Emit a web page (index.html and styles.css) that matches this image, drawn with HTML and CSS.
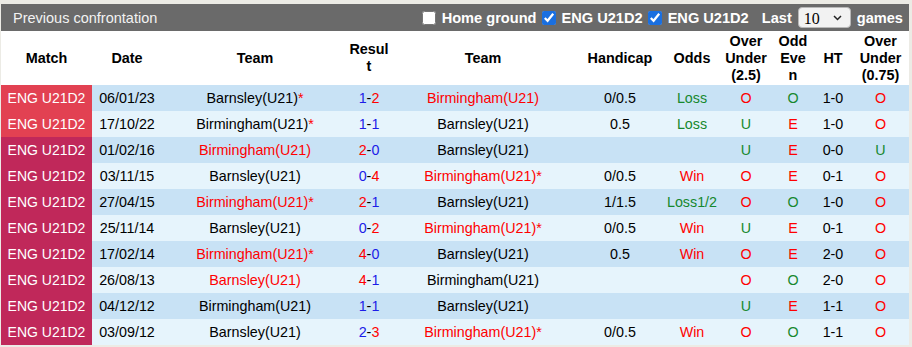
FILE: index.html
```html
<!DOCTYPE html>
<html>
<head>
<meta charset="utf-8">
<link rel="stylesheet" href="styles.css">
</head>
<body>
<div class="panel">
  <div class="bar">
    <span class="bar-title">Previous confrontation</span>
    <div class="controls">
      <label class="opt"><input type="checkbox">Home ground</label>
      <label class="opt"><input type="checkbox" checked>ENG U21D2</label>
      <label class="opt"><input type="checkbox" checked>ENG U21D2</label>
      <span class="last">Last</span>
      <span class="sel-wrap">
        <select class="sel"><option>10</option><option>20</option></select>
        <svg class="chev" width="9" height="6" viewBox="0 0 9 6"><path d="M1 1 L4.5 4.5 L8 1" fill="none" stroke="#222" stroke-width="1.5"/></svg>
      </span>
      <span class="games">games</span>
    </div>
  </div>
  <table class="grid">
    <colgroup>
      <col class="w-match"><col class="w-date"><col class="w-team"><col class="w-res"><col class="w-team">
      <col class="w-hc"><col class="w-odds"><col class="w-ou"><col class="w-oe"><col class="w-ht"><col class="w-ou2">
    </colgroup>
    <thead>
      <tr>
        <th>Match</th><th>Date</th><th>Team</th><th class="h-res">Result</th><th>Team</th>
        <th>Handicap</th><th>Odds</th><th>Over Under (2.5)</th><th class="h-oe">Odd Even</th><th>HT</th><th>Over Under (0.75)</th>
      </tr>
    </thead>
    <tbody>
      <tr class="r1"><td class="lg lg1">ENG U21D2</td><td>06/01/23</td><td>Barnsley(U21)<span class="r">*</span></td><td><span class="b">1</span>-<span class="r">2</span></td><td class="r">Birmingham(U21)</td><td>0/0.5</td><td class="g">Loss</td><td class="r">O</td><td class="g">O</td><td>1-0</td><td class="r">O</td></tr>
      <tr class="r2"><td class="lg lg1">ENG U21D2</td><td>17/10/22</td><td>Birmingham(U21)<span class="r">*</span></td><td><span class="b">1</span>-<span class="b">1</span></td><td>Barnsley(U21)</td><td>0.5</td><td class="g">Loss</td><td class="g">U</td><td class="r">E</td><td>1-0</td><td class="r">O</td></tr>
      <tr class="r1"><td class="lg">ENG U21D2</td><td>01/02/16</td><td class="r">Birmingham(U21)</td><td><span class="r">2</span>-<span class="b">0</span></td><td>Barnsley(U21)</td><td></td><td></td><td class="g">U</td><td class="r">E</td><td>0-0</td><td class="g">U</td></tr>
      <tr class="r2"><td class="lg">ENG U21D2</td><td>03/11/15</td><td>Barnsley(U21)</td><td><span class="b">0</span>-<span class="r">4</span></td><td class="r">Birmingham(U21)*</td><td>0/0.5</td><td class="r">Win</td><td class="r">O</td><td class="r">E</td><td>0-1</td><td class="r">O</td></tr>
      <tr class="r1"><td class="lg">ENG U21D2</td><td>27/04/15</td><td class="r">Birmingham(U21)*</td><td><span class="r">2</span>-<span class="b">1</span></td><td>Barnsley(U21)</td><td>1/1.5</td><td class="g">Loss1/2</td><td class="r">O</td><td class="g">O</td><td>1-0</td><td class="r">O</td></tr>
      <tr class="r2"><td class="lg">ENG U21D2</td><td>25/11/14</td><td>Barnsley(U21)</td><td><span class="b">0</span>-<span class="r">2</span></td><td class="r">Birmingham(U21)*</td><td>0/0.5</td><td class="r">Win</td><td class="g">U</td><td class="r">E</td><td>0-1</td><td class="r">O</td></tr>
      <tr class="r1"><td class="lg">ENG U21D2</td><td>17/02/14</td><td class="r">Birmingham(U21)*</td><td><span class="r">4</span>-<span class="b">0</span></td><td>Barnsley(U21)</td><td>0.5</td><td class="r">Win</td><td class="r">O</td><td class="r">E</td><td>2-0</td><td class="r">O</td></tr>
      <tr class="r2"><td class="lg">ENG U21D2</td><td>26/08/13</td><td class="r">Barnsley(U21)</td><td><span class="r">4</span>-<span class="b">1</span></td><td>Birmingham(U21)</td><td></td><td></td><td class="r">O</td><td class="g">O</td><td>2-0</td><td class="r">O</td></tr>
      <tr class="r1"><td class="lg">ENG U21D2</td><td>04/12/12</td><td>Birmingham(U21)</td><td><span class="b">1</span>-<span class="b">1</span></td><td>Barnsley(U21)</td><td></td><td></td><td class="g">U</td><td class="r">E</td><td>1-1</td><td class="r">O</td></tr>
      <tr class="r2"><td class="lg">ENG U21D2</td><td>03/09/12</td><td>Barnsley(U21)</td><td><span class="b">2</span>-<span class="r">3</span></td><td class="r">Birmingham(U21)*</td><td>0/0.5</td><td class="r">Win</td><td class="r">O</td><td class="g">O</td><td>1-1</td><td class="r">O</td></tr>
    </tbody>
  </table>
</div>
</body>
</html>
```
FILE: styles.css
```css
html, body {
  margin: 0;
  padding: 0;
  background: #ecebe5;
}
body {
  font-family: "Liberation Sans", Arial, sans-serif;
  font-size: 14px;
  color: #000;
}
.panel {
  margin: 4px 0 0 1px;
  width: 908px;
}
.bar {
  height: 27px;
  background: #6a6a6a;
  display: flex;
  align-items: center;
  justify-content: space-between;
  padding: 0 6px 0 12px;
}
.bar-title {
  color: #f2f2f2;
  font-size: 14.5px;
}
.controls {
  display: flex;
  align-items: center;
  color: #fff;
  font-weight: bold;
  font-size: 14.6px;
}
.opt {
  display: flex;
  align-items: center;
}
.opt input {
  margin: 0 6px 0 5px;
  width: 14px;
  height: 14px;
  accent-color: #1a6fe0;
}
.last {
  margin-left: 13px;
}
.sel-wrap {
  position: relative;
  margin: 0 6px;
  display: flex;
}
.sel {
  appearance: none;
  -webkit-appearance: none;
  width: 53px;
  height: 21px;
  border: 1px solid #b8b8b8;
  border-radius: 4px;
  background: #f2f2f2;
  font-family: "Liberation Serif", "Times New Roman", serif;
  font-size: 16px;
  padding: 1px 0 0 5px;
  color: #000;
}
.chev {
  position: absolute;
  right: 9px;
  top: 8px;
  pointer-events: none;
}
.grid {
  width: 908px;
  border-collapse: collapse;
  table-layout: fixed;
}
.w-match { width: 91px; }
.w-date { width: 70px; }
.w-team { width: 186px; }
.w-res { width: 42px; }
.w-hc { width: 88px; }
.w-odds { width: 56px; }
.w-ou { width: 52px; }
.w-oe { width: 42px; }
.w-ht { width: 38px; }
.w-ou2 { width: 57px; }
.grid th {
  background: #fff;
  height: 54px;
  padding: 0;
  font-size: 14.4px;
  font-weight: bold;
  line-height: 17px;
  text-align: center;
  vertical-align: middle;
  overflow-wrap: anywhere;
}
.grid th.h-res {
  word-break: break-all;
  padding: 0 1px;
}
.grid th.h-oe {
  word-break: break-all;
  padding: 0 5px;
}
.grid td {
  height: 26px;
  padding: 0;
  font-size: 14.3px;
  line-height: 16px;
  text-align: center;
  vertical-align: middle;
  white-space: nowrap;
}
.grid td.lg {
  font-size: 14px;
}
.r1 { background: #c8e2f5; }
.r2 { background: #e6f4fc; }
.grid td.lg {
  background: #c0285a;
  color: #fff;
}
.grid td.lg1 {
  background: #e24152;
}
.r { color: #ff0000; }
.b { color: #1c1ce8; }
.g { color: #16882e; }
```
